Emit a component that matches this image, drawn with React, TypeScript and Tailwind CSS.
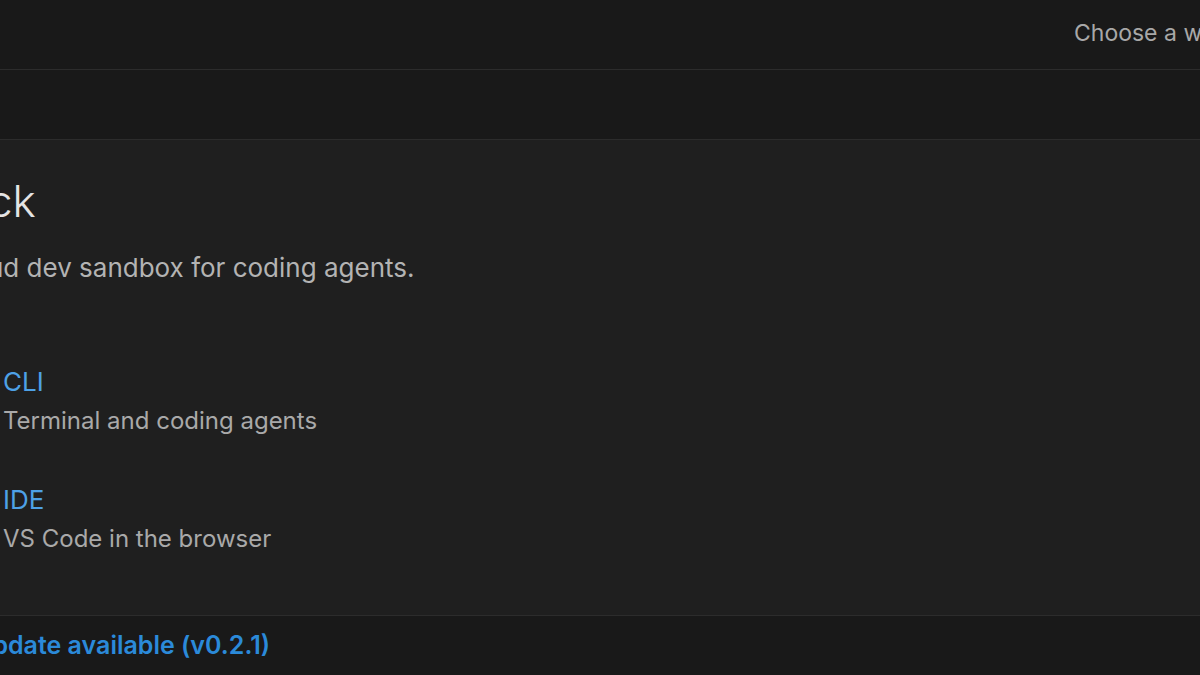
const font = { fontFamily: 'Inter, "Noto Sans", sans-serif' };

function Option({ title, desc }: { title: string; desc: string }) {
  return (
    <div className="flex flex-col">
      <div className="text-[26px] leading-[30px] text-[#4ea1e6]">{title}</div>
      <div className="mt-[10px] text-[24px] leading-[28px] text-[#a9a9a9]">{desc}</div>
    </div>
  );
}

export default function App() {
  return (
    <div className="w-[1200px] h-[675px] overflow-hidden flex flex-col bg-[#1f1f1f]" style={font}>
      {/* top bar */}
      <div className="h-[70px] shrink-0 bg-[#191919] border-b border-[#2c2c2c] flex items-center justify-end">
        <div className="w-[126px] shrink-0">
          <div className="whitespace-nowrap text-[23px] text-[#a8a8a8] pb-[2px]">Choose a workspace</div>
        </div>
      </div>
      {/* toolbar */}
      <div className="h-[70px] shrink-0 bg-[#191919] border-b border-[#2c2c2c]" />
      {/* main */}
      <div className="flex-1 flex flex-col pt-[35px]">
        <div className="whitespace-nowrap text-[44px] leading-[52px] font-light text-[#e4e4e4] -ml-[12px]">
          ck
        </div>
        <div className="mt-[25px] whitespace-nowrap text-[26px] leading-[32px] text-[#b3b3b3] -ml-[74px]">
          A cloud dev sandbox for coding agents.
        </div>
        <div className="mt-[83px] flex flex-col gap-[50px] pl-[3px]">
          <Option title="CLI" desc="Terminal and coding agents" />
          <Option title="IDE" desc="VS Code in the browser" />
        </div>
      </div>
      {/* status bar */}
      <div className="h-[60px] shrink-0 bg-[#191919] border-t border-[#2c2c2c] flex items-center">
        <div className="whitespace-nowrap text-[25px] font-semibold text-[#2b8ad9] -ml-[26px]">
          Update available (v0.2.1)
        </div>
      </div>
    </div>
  );
}
